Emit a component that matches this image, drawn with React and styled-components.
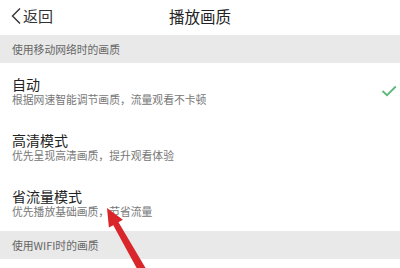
import React from "react";
import styled, { createGlobalStyle } from "styled-components";

const GlobalStyle = createGlobalStyle`
    html, body {
        margin: 0;
        padding: 0;
        background: #fff;
    }
    body {
        font-family: "Noto Sans CJK SC", "Noto Sans", sans-serif;
    }
`;

const options = [
    { title: "自动", desc: "根据网速智能调节画质，流量观看不卡顿", checked: true },
    { title: "高清模式", desc: "优先呈现高清画质，提升观看体验" },
    { title: "省流量模式", desc: "优先播放基础画质，节省流量" },
];

function App() {
    return (
        <Page>
            <GlobalStyle />
            <Header>
                <Back>
                    <svg width="12" height="18" viewBox="0 0 12 18">
                        <path d="M10 1.5 L2.5 9 L10 16.5" fill="none" stroke="#333" strokeWidth="1.4" />
                    </svg>
                    返回
                </Back>
                <Title>播放画质</Title>
            </Header>
            <Band>使用移动网络时的画质</Band>
            {options.map((o) => (
                <Row key={o.title}>
                    <Texts>
                        <RowTitle>{o.title}</RowTitle>
                        <RowDesc>{o.desc}</RowDesc>
                    </Texts>
                    {o.checked && (
                        <svg width="16" height="12" viewBox="0 0 16 12">
                            <path d="M1.5 6 L6 10.2 L14.8 1.5" fill="none" stroke="#5cb97a" strokeWidth="1.8" />
                        </svg>
                    )}
                </Row>
            ))}
            <Band>使用WIFI时的画质</Band>
            <Arrow width="400" height="268" viewBox="0 0 400 268">
                <polygon
                    points="107,208 122.9,219.8 118.5,222.2 148.5,273 141.5,277 113.3,225.2 108.9,227.6"
                    fill="#d8262b"
                />
            </Arrow>
        </Page>
    );
}

export default App;

const Page = styled.div`
    position: relative;
    width: 400px;
    height: 268px;
    overflow: hidden;
    background: #fff;
`;
const Header = styled.div`
    position: relative;
    height: 35px;
    display: flex;
    align-items: center;
    justify-content: center;
`;
const Back = styled.div`
    position: absolute;
    left: 10px;
    top: 0;
    height: 31px;
    display: flex;
    align-items: center;
    gap: 1px;
    font-size: 15px;
    color: #333;
`;
const Title = styled.div`
    font-size: 15.5px;
    color: #222;
    margin-top: -4px;
`;
const Band = styled.div`
    height: 28px;
    display: flex;
    align-items: center;
    padding: 0 12px;
    background: #e9e9e9;
    font-size: 10.8px;
    color: #666;
`;
const Row = styled.div`
    display: flex;
    align-items: center;
    justify-content: space-between;
    padding: 13px 3px 13px 12px;
    height: 30px;
`;
const Texts = styled.div`
    display: flex;
    flex-direction: column;
`;
const RowTitle = styled.div`
    font-size: 14px;
    line-height: 17px;
    color: #222;
`;
const RowDesc = styled.div`
    font-size: 10.8px;
    line-height: 13px;
    color: #777;
`;
const Arrow = styled.svg`
    position: absolute;
    left: 0;
    top: 0;
    pointer-events: none;
`;
